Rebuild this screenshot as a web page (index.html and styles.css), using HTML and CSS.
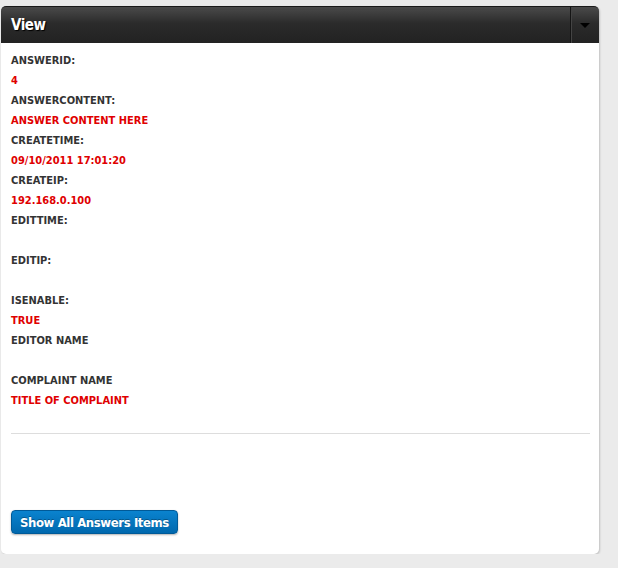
FILE: index.html
```html
<!DOCTYPE html>
<html>
<head>
<meta charset="utf-8">
<link rel="stylesheet" href="styles.css">
</head>
<body>
<div class="panel">
  <div class="panel-head">
    <h2 class="title">View</h2>
    <div class="toggle"><span class="caret"></span></div>
  </div>
  <div class="panel-body">
    <dl class="fields">
      <dt>ANSWERID:</dt><dd>4</dd>
      <dt>ANSWERCONTENT:</dt><dd>ANSWER CONTENT HERE</dd>
      <dt>CREATETIME:</dt><dd>09/10/2011 17:01:20</dd>
      <dt>CREATEIP:</dt><dd>192.168.0.100</dd>
      <dt>EDITTIME:</dt><dd></dd>
      <dt>EDITIP:</dt><dd></dd>
      <dt>ISENABLE:</dt><dd>TRUE</dd>
      <dt>EDITOR NAME</dt><dd></dd>
      <dt>COMPLAINT NAME</dt><dd>TITLE OF COMPLAINT</dd>
    </dl>
    <hr class="sep">
    <div class="actions">
      <button class="btn">Show All Answers Items</button>
    </div>
  </div>
</div>
</body>
</html>
```
FILE: styles.css
```css
html, body {
  margin: 0;
  padding: 0;
}
body {
  background: #ebebeb;
  font-family: "DejaVu Sans Condensed", "DejaVu Sans", sans-serif;
  padding: 6px 19px 0 1px;
}
.panel {
  width: 598px;
  background: #fff;
  border-radius: 5px;
  box-shadow: 1px 1px 2px rgba(0,0,0,0.18);
  height: 548px;
}
.panel-head {
  display: flex;
  height: 37px;
  background: linear-gradient(#4a4a4a, #2b2b2b 45%, #222);
  border-radius: 5px 5px 0 0;
  border-top: 1px solid #1a1a1a;
  box-sizing: border-box;
}
.title {
  flex: 1;
  margin: 0;
  padding: 0 0 0 10px;
  line-height: 36px;
  font-size: 15px;
  font-weight: bold;
  color: #fff;
  letter-spacing: -0.5px;
  text-shadow: 1px 1px 1px #000;
}
.toggle {
  width: 28px;
  border-left: 1px solid #151515;
  box-shadow: inset 1px 0 0 #444;
  display: flex;
  align-items: center;
  justify-content: center;
}
.caret {
  width: 0;
  height: 0;
  border-left: 5px solid transparent;
  border-right: 5px solid transparent;
  border-top: 5px solid #000;
  margin-top: 1px;
}
.panel-body {
  padding: 8px 10px 0 10px;
}
.fields {
  margin: 0;
  font-size: 11px;
  font-weight: bold;
}
.fields dt, .fields dd {
  margin: 0;
  height: 20px;
  line-height: 20px;
}
.fields dt {
  color: #333;
}
.fields dd {
  color: #e00000;
}
.sep {
  border: 0;
  border-top: 1px solid #ddd;
  margin: 22px 0 0 0;
  width: 579px;
}
.actions {
  padding-top: 76px;
}
.btn {
  font-family: "DejaVu Sans Condensed", "DejaVu Sans", sans-serif;
  font-size: 13px;
  font-weight: bold;
  letter-spacing: -0.4px;
  color: #fff;
  background: linear-gradient(#0a83cf, #0068ae);
  border: 1px solid #005a98;
  border-radius: 4px;
  height: 24px;
  padding: 0 8px 0 8px;
  box-shadow: 0 1px 2px rgba(0,0,0,0.3);
  text-shadow: 0 -1px 0 rgba(0,0,0,0.3);
}
```
